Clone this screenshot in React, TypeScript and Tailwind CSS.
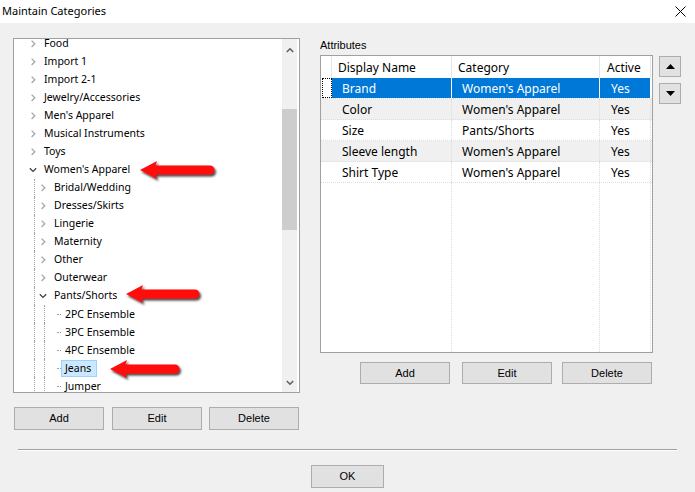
import React from 'react';

type Node = { label: string; level: 0 | 1 | 2; open?: boolean; selected?: boolean };

const tree: Node[] = [
  { label: 'Food', level: 0 },
  { label: 'Import 1', level: 0 },
  { label: 'Import 2-1', level: 0 },
  { label: 'Jewelry/Accessories', level: 0 },
  { label: "Men's Apparel", level: 0 },
  { label: 'Musical Instruments', level: 0 },
  { label: 'Toys', level: 0 },
  { label: "Women's Apparel", level: 0, open: true },
  { label: 'Bridal/Wedding', level: 1 },
  { label: 'Dresses/Skirts', level: 1 },
  { label: 'Lingerie', level: 1 },
  { label: 'Maternity', level: 1 },
  { label: 'Other', level: 1 },
  { label: 'Outerwear', level: 1 },
  { label: 'Pants/Shorts', level: 1, open: true },
  { label: '2PC Ensemble', level: 2 },
  { label: '3PC Ensemble', level: 2 },
  { label: '4PC Ensemble', level: 2 },
  { label: 'Jeans', level: 2, selected: true },
  { label: 'Jumper', level: 2 },
];

const attributes = [
  { name: 'Brand', category: "Women's Apparel", active: 'Yes' },
  { name: 'Color', category: "Women's Apparel", active: 'Yes' },
  { name: 'Size', category: 'Pants/Shorts', active: 'Yes' },
  { name: 'Sleeve length', category: "Women's Apparel", active: 'Yes' },
  { name: 'Shirt Type', category: "Women's Apparel", active: 'Yes' },
];

function Chevron({ open }: { open?: boolean }) {
  if (open) {
    return (
      <svg width="8" height="10" viewBox="0 0 8 10" className="shrink-0">
        <polyline points="0.8,3.2 4,6.4 7.2,3.2" fill="none" stroke="#404040" strokeWidth="1.3" />
      </svg>
    );
  }
  return (
    <svg width="8" height="10" viewBox="0 0 8 10" className="shrink-0">
      <polyline points="2.6,1.6 5.8,4.8 2.6,8" fill="none" stroke="#a6a6a6" strokeWidth="1.3" />
    </svg>
  );
}

function TreeRow({ node }: { node: Node }) {
  if (node.level === 0) {
    return (
      <div className="flex h-[18px] items-center pl-[15px]">
        <Chevron open={node.open} />
        <span className="ml-[7px] whitespace-nowrap">{node.label}</span>
      </div>
    );
  }
  if (node.level === 1) {
    return (
      <div className="flex h-[18px] items-center">
        <div className="w-[20px] shrink-0" />
        <div className="h-full w-0 border-l border-dotted border-[#a0a0a0]" />
        <div className="ml-[4px]">
          <Chevron open={node.open} />
        </div>
        <span className="ml-[7px] whitespace-nowrap">{node.label}</span>
      </div>
    );
  }
  return (
    <div className="flex h-[18px] items-center">
      <div className="w-[20px] shrink-0" />
      <div className="h-full w-0 border-l border-dotted border-[#a0a0a0]" />
      <div className="w-[9px] shrink-0" />
      <div className="h-full w-0 border-l border-dotted border-[#a0a0a0]" />
      <div className="ml-[12px] h-0 w-[4px] border-t border-dotted border-[#a0a0a0]" />
      <span
        className={
          node.selected
            ? 'h-[17px] whitespace-nowrap border border-[#99d1ff] bg-[#cce8ff] pl-[3px] pr-[5px] leading-[15px]'
            : 'h-[17px] whitespace-nowrap border border-transparent pl-[3px] pr-[5px] leading-[15px]'
        }
      >
        {node.label}
      </span>
    </div>
  );
}

function Button({ label, className = '' }: { label: string; className?: string }) {
  return (
    <button
      className={`border border-[#adadad] bg-[#e1e1e1] font-['Liberation_Sans',Arial,sans-serif] text-[11px] text-black ${className}`}
    >
      {label}
    </button>
  );
}

function Arrow({ length, id }: { length: number; id: string }) {
  const end = length - 4;
  return (
    <svg width={length + 8} height="26" viewBox={`0 0 ${length + 8} 26`}>
      <defs>
        <filter id={id} x="-10%" y="-30%" width="130%" height="180%">
          <feDropShadow dx="1.5" dy="2" stdDeviation="1.2" floodColor="#000" floodOpacity="0.75" />
        </filter>
      </defs>
      <path
        d={`M1 10 L18 1 L16.5 5.5 L${end} 5.5 A4.5 4.5 0 0 1 ${end} 14.5 L16.5 14.5 L18 19 Z`}
        fill="#ff0d0d"
        filter={`url(#${id})`}
      />
    </svg>
  );
}

export default function App() {
  return (
    <div className="relative h-[492px] w-[695px] overflow-hidden bg-[#f0f0f0] font-['Noto_Sans',sans-serif] text-black">
      {/* Title bar */}
      <div className="flex h-[23px] items-center justify-between bg-white pl-[2px] pr-[8px]">
        <span className="text-[11px]">Maintain Categories</span>
        <svg width="11" height="11" viewBox="0 0 11 11" className="mr-[1px]">
          <path d="M0.5 0.5 L10.5 10.5 M10.5 0.5 L0.5 10.5" stroke="#000" strokeWidth="1" />
        </svg>
      </div>

      <div className="flex pl-[13px] pt-[15px]">
        {/* Left: category tree */}
        <div className="flex w-[287px] flex-col">
          <div className="flex h-[355px] border border-[#a0a0a0] bg-white">
            <div className="flex-1 overflow-hidden text-[10.5px]">
              <div className="-mt-[4px]">
                {tree.map((n) => (
                  <TreeRow key={n.label} node={n} />
                ))}
              </div>
            </div>
            <div className="flex w-[15px] flex-col bg-[#f0f0f0]">
              <div className="flex h-[20px] items-center justify-center pt-[1px]">
                <svg width="8" height="6" viewBox="0 0 8 6">
                  <polyline points="0.8,5 4,1.8 7.2,5" fill="none" stroke="#606060" strokeWidth="1.6" />
                </svg>
              </div>
              <div className="h-[50px]" />
              <div className="h-[121px] bg-[#cdcdcd]" />
              <div className="flex-1" />
              <div className="flex h-[18px] items-center justify-center">
                <svg width="8" height="6" viewBox="0 0 8 6">
                  <polyline points="0.8,1 4,4.2 7.2,1" fill="none" stroke="#606060" strokeWidth="1.6" />
                </svg>
              </div>
            </div>
            <div className="w-[2px]" />
          </div>
          <div className="mt-[14px] flex pl-[1px]">
            <Button label="Add" className="h-[23px] w-[90px]" />
            <Button label="Edit" className="ml-[8px] h-[23px] w-[90px]" />
            <Button label="Delete" className="ml-[7px] h-[23px] w-[90px]" />
          </div>
        </div>

        {/* Right: attributes */}
        <div className="ml-[20px] flex flex-col">
          <div className="h-[17px] font-['Liberation_Sans',Arial,sans-serif] text-[11px] leading-[15px]">Attributes</div>
          <div className="flex">
            <div className="flex h-[298px] w-[333px] flex-col border border-[#a0a0a0] bg-white text-[12px]">
              <div className="flex h-[22px] shrink-0 leading-[24px]">
                <div className="w-[11px] border-r border-[#e5e5e5]" />
                <div className="w-[120px] border-r border-[#e5e5e5] pl-[6px]">Display Name</div>
                <div className="w-[148px] border-r border-[#e5e5e5] pl-[6px]">Category</div>
                <div className="w-[51px] border-r border-[#e5e5e5] pl-[7px]">Active</div>
              </div>
              {attributes.map((a, i) => {
                const selected = i === 0;
                const shaded = i % 2 === 1;
                const cell = selected
                  ? 'bg-[#0078d7] text-white border-r border-white'
                  : 'border-r border-dotted border-[#dcdcdc]';
                return (
                  <div
                    key={a.name}
                    className={`flex h-[21px] shrink-0 border-b border-dotted border-[#dcdcdc] leading-[22px] ${shaded ? 'bg-[#f0f0f0]' : ''}`}
                  >
                    <div className="w-[11px] bg-white">
                      {selected ? (
                        <div className="ml-[1px] h-full w-[10px] border border-dotted border-black" />
                      ) : (
                        <div className={`h-full ${shaded ? 'bg-[#f0f0f0]' : ''}`} />
                      )}
                    </div>
                    <div className={`w-[120px] pl-[10px] ${cell}`}>{a.name}</div>
                    <div className={`w-[148px] pl-[10px] ${cell}`}>{a.category}</div>
                    <div className={`w-[51px] pl-[11px] ${cell}`}>{a.active}</div>
                  </div>
                );
              })}
              <div className="flex flex-1">
                <div className="w-[11px]" />
                <div className="w-[120px] border-r border-dotted border-[#dcdcdc]" />
                <div className="w-[148px] border-r border-dotted border-[#dcdcdc]" />
                <div className="w-[51px] border-r border-dotted border-[#dcdcdc]" />
              </div>
            </div>
            <div className="ml-[6px] mt-[1px] flex flex-col gap-[6px]">
              <button className="flex h-[21px] w-[22px] items-center justify-center border border-[#adadad] bg-[#e1e1e1]">
                <svg width="9" height="5" viewBox="0 0 9 5">
                  <polygon points="0,5 4.5,0 9,5" fill="#000" />
                </svg>
              </button>
              <button className="flex h-[21px] w-[22px] items-center justify-center border border-[#adadad] bg-[#e1e1e1]">
                <svg width="9" height="5" viewBox="0 0 9 5">
                  <polygon points="0,0 4.5,5 9,0" fill="#000" />
                </svg>
              </button>
            </div>
          </div>
          <div className="mt-[9px] flex pl-[40px]">
            <Button label="Add" className="h-[22px] w-[90px]" />
            <Button label="Edit" className="ml-[12px] h-[22px] w-[90px]" />
            <Button label="Delete" className="ml-[10px] h-[22px] w-[90px]" />
          </div>
        </div>
      </div>

      {/* Separator and OK */}
      <div className="ml-[18px] mt-[19px] h-[2px] w-[659px] border-t border-b border-t-[#a0a0a0] border-b-white" />
      <div className="mt-[11px] pl-[311px]">
        <Button label="OK" className="h-[23px] w-[73px]" />
      </div>

      {/* Red annotation arrows */}
      <div className="absolute left-[139px] top-[160px]">
        <Arrow length={75} id="arrow-a" />
      </div>
      <div className="absolute left-[125px] top-[284px]">
        <Arrow length={74} id="arrow-b" />
      </div>
      <div className="absolute left-[109px] top-[359px]">
        <Arrow length={70} id="arrow-c" />
      </div>
    </div>
  );
}
